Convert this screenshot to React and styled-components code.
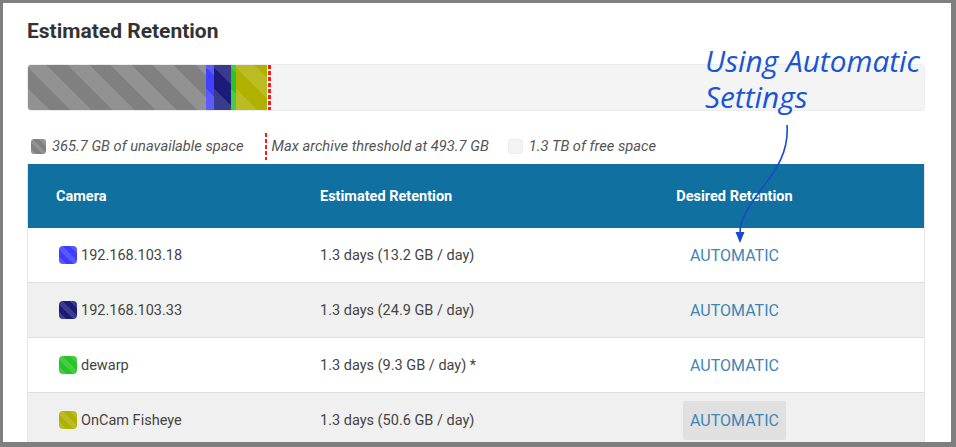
import React from "react";
import styled, { createGlobalStyle } from "styled-components";

const Global = createGlobalStyle`
  html, body { margin: 0; padding: 0; background: #7f7f7f; }
  body { font-family: Roboto, "Liberation Sans", sans-serif; }
  * { box-sizing: border-box; }
`;

const Frame = styled.div`
  position: relative;
  margin: 3px 5px 0 3px;
  height: 439px;
  background: #fff;
  padding: 0 26px 0 24px;
  overflow: hidden;
`;

const Title = styled.h2`
  margin: 0;
  padding-top: 15px;
  font-size: 21px;
  line-height: 26px;
  font-weight: 700;
  color: #333;
`;

const Bar = styled.div`
  margin-top: 20px;
  height: 47px;
  display: flex;
  background: #f4f4f4;
  border: 1px solid #ececec;
  border-radius: 4px;
  overflow: hidden;
`;

const stripes = `repeating-linear-gradient(45deg, rgba(255,255,255,0.14) 0 15px, transparent 15px 30px)`;

const Segment = styled.div`
  flex: 0 0 ${(p) => p.$w}px;
  background-color: ${(p) => p.$c};
  background-image: ${stripes};
`;

const Threshold = styled.div`
  flex: 0 0 3px;
  margin-left: 1px;
  background: repeating-linear-gradient(180deg, #ff1a1a 0 4px, transparent 4px 6px);
`;

const Legend = styled.div`
  display: flex;
  align-items: center;
  height: 53px;
  padding: 17px 0 0 4px;
  font-style: italic;
  font-size: 14.7px;
  color: #555;
`;

const LegendItem = styled.div`
  display: flex;
  align-items: center;
  margin-right: ${(p) => p.$mr}px;
`;

const LegendSwatch = styled.span`
  width: 15px;
  height: 15px;
  border-radius: 3px;
  margin-right: 6px;
  background-color: ${(p) => p.$c};
  background-image: ${(p) => (p.$striped ? `repeating-linear-gradient(45deg, rgba(255,255,255,0.14) 0 4px, transparent 4px 8px)` : "none")};
  border: ${(p) => (p.$striped ? "none" : "1px solid #ececec")};
`;

const LegendLine = styled.span`
  width: 2px;
  height: 27px;
  margin-right: 5px;
  background: repeating-linear-gradient(180deg, #ff1a1a 0 4px, transparent 4px 6px);
`;

const Table = styled.div`
  border: 1px solid #e6e6e6;
  border-top: none;
`;

const Row = styled.div`
  display: grid;
  grid-template-columns: 264px 261px 1fr;
  align-items: center;
  height: ${(p) => (p.$head ? 64 : 55)}px;
  background: ${(p) => (p.$head ? "#10709f" : p.$alt ? "#f0f0f0" : "#fff")};
  border-bottom: ${(p) => (p.$head ? "none" : "1px solid #dedede")};
  color: ${(p) => (p.$head ? "#fff" : "#444")};
  font-size: 14.5px;
  font-weight: ${(p) => (p.$head ? 700 : 400)};
`;

const Cell = styled.div`
  padding-left: 28px;
  display: flex;
  align-items: center;
  ${(p) => p.$center && `justify-content: center; padding-left: 0; padding-right: 8px;`}
`;

const CamSwatch = styled.span`
  width: 18px;
  height: 18px;
  border-radius: 4px;
  margin-left: 3px;
  margin-right: 4px;
  background-color: ${(p) => p.$c};
  background-image: repeating-linear-gradient(45deg, rgba(255,255,255,0.14) 0 5px, transparent 5px 10px);
`;

const AutoButton = styled.span`
  display: inline-flex;
  align-items: center;
  justify-content: center;
  height: 39px;
  padding: 0 7px;
  border-radius: 2px;
  font-size: 16px;
  color: #3f86b5;
  text-transform: uppercase;
  background: ${(p) => (p.$hover ? "#e0e0e0" : "transparent")};
`;

const Note = styled.div`
  position: absolute;
  left: 702px;
  top: 40px;
  font-family: "Open Sans", "Noto Sans", sans-serif;
  font-style: italic;
  font-size: 29.8px;
  line-height: 36px;
  color: #1a55d4;
`;

const Arrow = styled.svg`
  position: absolute;
  left: 0;
  top: 0;
  pointer-events: none;
`;

const cams = [
  { name: "192.168.103.18", c: "#3d3dff", ret: "1.3 days (13.2 GB / day)" },
  { name: "192.168.103.33", c: "#1b1b78", ret: "1.3 days (24.9 GB / day)" },
  { name: "dewarp", c: "#27c427", ret: "1.3 days (9.3 GB / day) *" },
  { name: "OnCam Fisheye", c: "#b0b000", ret: "1.3 days (50.6 GB / day)", hover: true },
];

export default function App() {
  return (
    <>
      <Global />
      <Frame>
        <Title>Estimated Retention</Title>
        <Bar>
          <Segment $w={178} $c="#808080" />
          <Segment $w={8} $c="#4040ff" />
          <Segment $w={17} $c="#1b1b78" />
          <Segment $w={5} $c="#27c427" />
          <Segment $w={31} $c="#b0b000" />
          <Threshold />
        </Bar>
        <Legend>
          <LegendItem $mr={21}>
            <LegendSwatch $c="#808080" $striped />
            365.7 GB of unavailable space
          </LegendItem>
          <LegendItem $mr={19}>
            <LegendLine />
            Max archive threshold at 493.7 GB
          </LegendItem>
          <LegendItem $mr={0}>
            <LegendSwatch $c="#f4f4f4" />
            1.3 TB of free space
          </LegendItem>
        </Legend>
        <Table>
          <Row $head>
            <Cell>Camera</Cell>
            <Cell>Estimated Retention</Cell>
            <Cell $center>Desired Retention</Cell>
          </Row>
          {cams.map((cam, i) => (
            <Row key={cam.name} $alt={i % 2 === 1}>
              <Cell>
                <CamSwatch $c={cam.c} />
                {cam.name}
              </Cell>
              <Cell>{cam.ret}</Cell>
              <Cell $center>
                <AutoButton $hover={cam.hover}>Automatic</AutoButton>
              </Cell>
            </Row>
          ))}
        </Table>
        <Note>
          Using Automatic
          <br />
          Settings
        </Note>
        <Arrow width="953" height="444" viewBox="0 0 953 444">
          <path
            d="M784 122 C 786 150, 772 168, 760 184 C 746 203, 737 215, 737 230"
            fill="none"
            stroke="#1a49c9"
            strokeWidth="1.6"
          />
          <path d="M732.5 229 L741.5 229 L737 240 Z" fill="#1a49c9" />
        </Arrow>
      </Frame>
    </>
  );
}
